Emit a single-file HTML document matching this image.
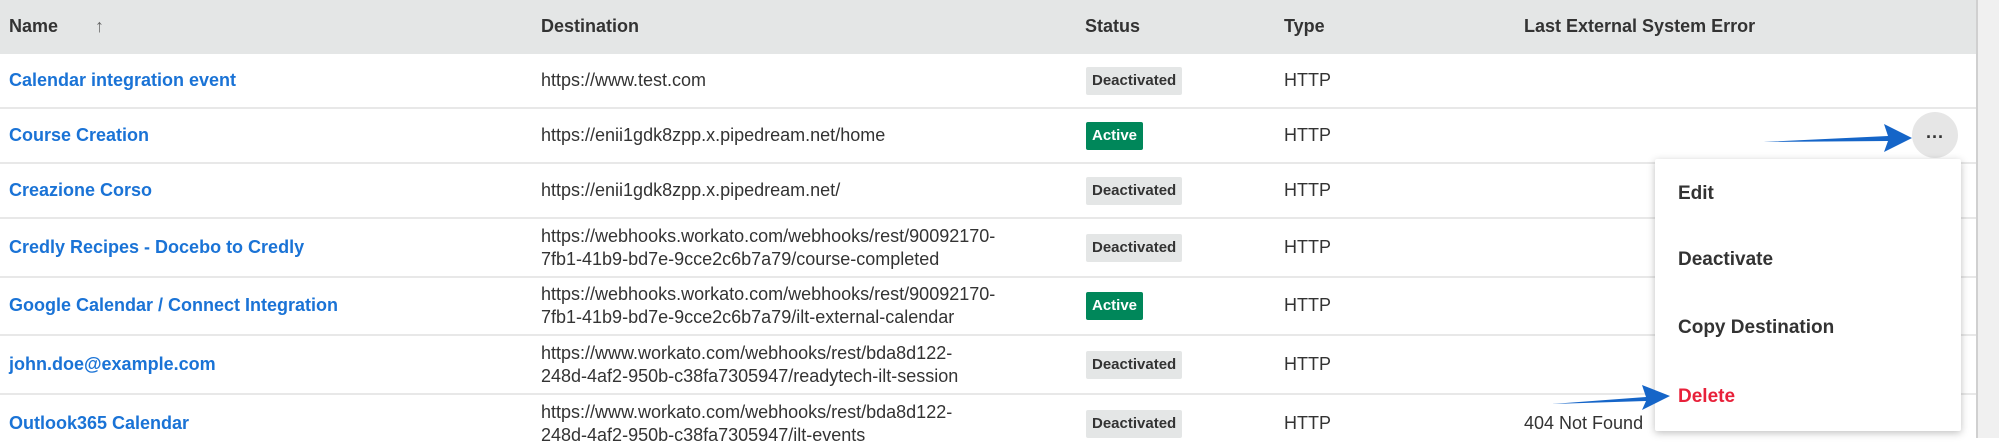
<!DOCTYPE html>
<html><head><style>
body{margin:0;width:1999px;height:438px;overflow:hidden;background:#fff;font-family:"Liberation Sans",sans-serif;color:#333;position:relative}
.hdr{position:absolute;left:0;top:0;width:1976px;height:54px;background:#e4e6e6}
.t{position:absolute;font-size:18px;white-space:nowrap;line-height:23px}
.h{font-weight:bold;color:#333;top:15px}
.n{color:#1a73d6;font-weight:bold;left:9px}
.line{position:absolute;left:0;width:1976px;height:2px;background:#e8e8e8}
.b{position:absolute;left:1086px;height:28px;line-height:28px;font-size:15px;font-weight:bold;padding:0 6px;border-radius:2px;background:#e4e6e6;color:#333}
.a{background:#00875a;color:#fff}
.menu{position:absolute;left:1655px;top:159px;width:306px;height:272px;background:#fff;box-shadow:0 2px 8px rgba(0,0,0,.25);border-radius:2px}
.mi{position:absolute;left:23px;font-size:19px;font-weight:bold;color:#333}
</style></head><body>
<div class="hdr"></div>
<div class="t h" style="left:9px">Name</div>
<div class="t h" style="left:95px;color:#666">↑</div>
<div class="t h" style="left:541px">Destination</div>
<div class="t h" style="left:1085px">Status</div>
<div class="t h" style="left:1284px">Type</div>
<div class="t h" style="left:1524px">Last External System Error</div>
<div class="line" style="top:107px"></div><div class="line" style="top:162px"></div><div class="line" style="top:217px"></div><div class="line" style="top:276px"></div><div class="line" style="top:334px"></div><div class="line" style="top:393px"></div>

<div class="t n" style="top:69px">Calendar integration event</div>
<div class="t" style="left:541px;top:69px">https://www.test.com</div>
<div class="b" style="top:67px">Deactivated</div><div class="t" style="left:1284px;top:69px">HTTP</div>

<div class="t n" style="top:124px">Course Creation</div>
<div class="t" style="left:541px;top:124px">https://enii1gdk8zpp.x.pipedream.net/home</div>
<div class="b a" style="top:122px">Active</div><div class="t" style="left:1284px;top:124px">HTTP</div>

<div class="t n" style="top:179px">Creazione Corso</div>
<div class="t" style="left:541px;top:179px">https://enii1gdk8zpp.x.pipedream.net/</div>
<div class="b" style="top:177px">Deactivated</div><div class="t" style="left:1284px;top:179px">HTTP</div>

<div class="t n" style="top:236px">Credly Recipes - Docebo to Credly</div>
<div class="t" style="left:541px;top:225px">https://webhooks.workato.com/webhooks/rest/90092170-<br>7fb1-41b9-bd7e-9cce2c6b7a79/course-completed</div>
<div class="b" style="top:234px">Deactivated</div><div class="t" style="left:1284px;top:236px">HTTP</div>

<div class="t n" style="top:294px">Google Calendar / Connect Integration</div>
<div class="t" style="left:541px;top:283px">https://webhooks.workato.com/webhooks/rest/90092170-<br>7fb1-41b9-bd7e-9cce2c6b7a79/ilt-external-calendar</div>
<div class="b a" style="top:292px">Active</div><div class="t" style="left:1284px;top:294px">HTTP</div>

<div class="t n" style="top:353px">john.doe@example.com</div>
<div class="t" style="left:541px;top:342px">https://www.workato.com/webhooks/rest/bda8d122-<br>248d-4af2-950b-c38fa7305947/readytech-ilt-session</div>
<div class="b" style="top:351px">Deactivated</div><div class="t" style="left:1284px;top:353px">HTTP</div>

<div class="t n" style="top:412px">Outlook365 Calendar</div>
<div class="t" style="left:541px;top:401px">https://www.workato.com/webhooks/rest/bda8d122-<br>248d-4af2-950b-c38fa7305947/ilt-events</div>
<div class="b" style="top:410px">Deactivated</div><div class="t" style="left:1284px;top:412px">HTTP</div>
<div class="t" style="left:1524px;top:412px">404 Not Found</div>

<div style="position:absolute;left:1976px;top:0;width:2px;height:438px;background:#d0d0d0"></div>
<div style="position:absolute;left:1978px;top:0;width:21px;height:438px;background:#f0f0f0"></div>

<div style="position:absolute;left:1912px;top:112px;width:46px;height:46px;border-radius:50%;background:#e6e6e6;text-align:center;line-height:50px;font-weight:bold;font-size:18px;color:#333">···</div>

<div class="menu">
<div class="mi" style="top:24px">Edit</div>
<div class="mi" style="top:90px">Deactivate</div>
<div class="mi" style="top:158px">Copy Destination</div>
<div class="mi" style="top:227px;color:#e8213a">Delete</div>
</div>

<svg style="position:absolute;left:0;top:0" width="1999" height="438">
<path d="M1763 142 L1888 136 L1884 124 L1912 138 L1884 152 L1888 141 Z" fill="#1565c8"/>
<path d="M1552 404 L1646 397 L1642 385 L1670 396 L1642 410 L1646 401 Z" fill="#1565c8"/>
</svg>
</body></html>
